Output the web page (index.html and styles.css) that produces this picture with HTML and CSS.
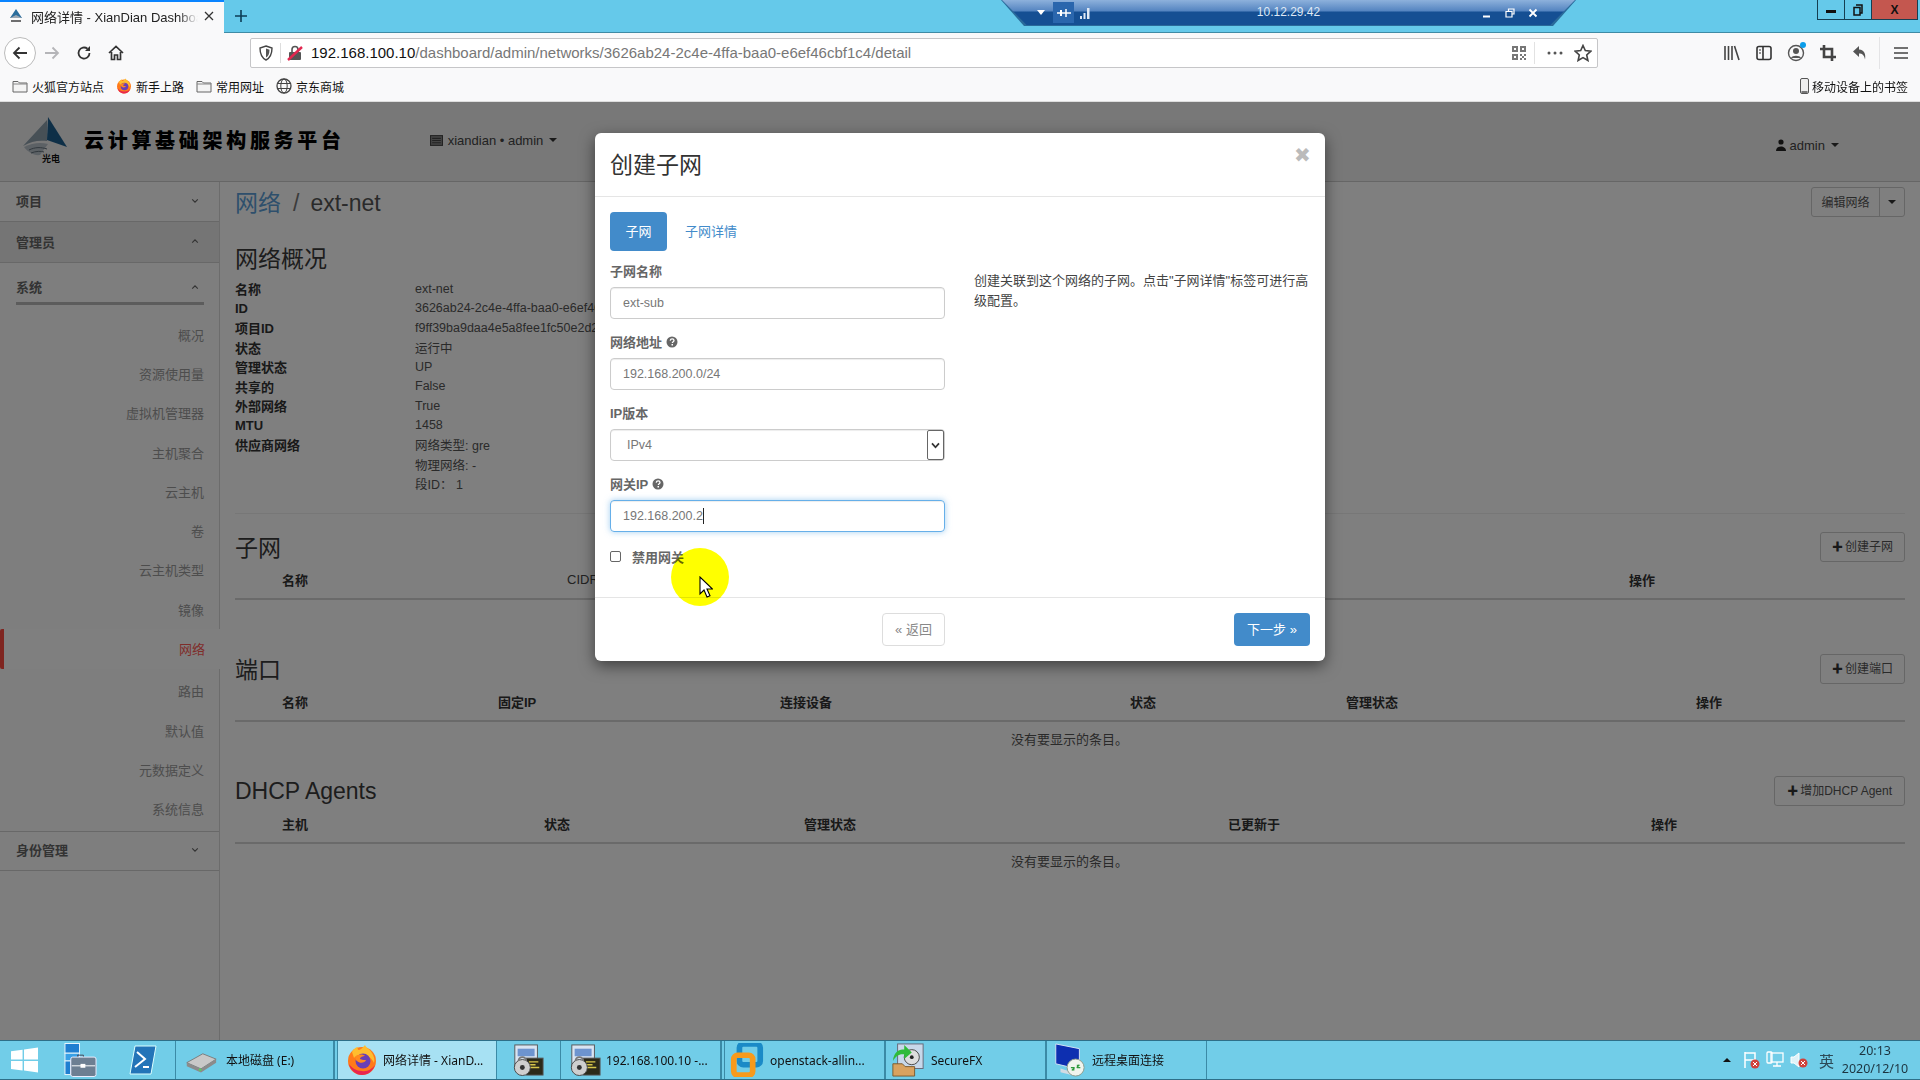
FILE: index.html
```html
<!DOCTYPE html>
<html lang="zh-CN">
<head>
<meta charset="utf-8">
<title>网络详情 - XianDian Dashboard</title>
<link rel="stylesheet" href="styles.css">
</head>
<body>
<svg class="sprite" width="0" height="0" aria-hidden="true">
  <defs>
    <symbol id="folder" viewBox="0 0 16 14"><path d="M1 2.500h5l1.500 1.500H15v9H1z" fill="#f4f4f4" stroke="#666"/><path d="M1 5h14" stroke="#888"/></symbol>
    <symbol id="ff" viewBox="0 0 32 32"><circle cx="16" cy="17" r="14" fill="#ff7a1a"/><path d="M6 8C8 4 11 3 12 3c-1 2 0 3 1 3 3-1 5-4 6-5 1 3 5 4 7 8 2 3 3 7 2 10-3-6-8-9-13-8-3 0-6 1-7 3z" fill="#ffbd2e"/><path d="M3 20c1 6 7 11 13 11s11-4 13-10c-3 4-8 7-13 6-6 0-10-3-13-7z" fill="#e8264f"/><circle cx="17" cy="17" r="7.500" fill="#6a3fb5"/><path d="M10 12c3-2 7-2 9 0-2 0-5 1-5 3 2 1 4 1 6 1-1 3-6 4-9 1-2-1-2-3-1-5z" fill="#ff8a1e"/></symbol>
    <symbol id="lockapp" viewBox="0 0 34 34"><rect x="3" y="1" width="24" height="24" fill="#d9e4f2" stroke="#555"/><rect x="6" y="5" width="18" height="8" fill="#6d94cf"/><rect x="15" y="15" width="18" height="18" fill="#2c2a1a" stroke="#555"/><path d="M18 19h10M18 22h7M18 25h11" stroke="#d7c64a" stroke-width="1.500"/><circle cx="11" cy="25" r="8.500" fill="#cfcfcf" stroke="#444"/><circle cx="11" cy="25" r="2.600" fill="#333"/><path d="M7 18a4 4 0 0 1 8 0" fill="none" stroke="#777" stroke-width="2"/></symbol>
    <symbol id="chev-down" viewBox="0 0 10 6"><path d="M1.500 1 5 4.500 8.500 1" fill="none" stroke="#666" stroke-width="1.400"/></symbol>
    <symbol id="chev-up" viewBox="0 0 10 6"><path d="M1.500 5 5 1.500 8.500 5" fill="none" stroke="#666" stroke-width="1.400"/></symbol>
    <symbol id="help" viewBox="0 0 12 12"><circle cx="6" cy="6" r="5.500" fill="#666"/><path d="M4.200 4.600c.2-1.200 1-1.700 2-1.700 1.100 0 1.800.7 1.800 1.500 0 1.300-1.700 1.300-1.700 2.600" fill="none" stroke="#fff" stroke-width="1.300"/><rect x="5.500" y="8" width="1.500" height="1.500" fill="#fff"/></symbol>
  </defs>
</svg>

<div class="tabstrip">
  <div class="tab">
    <svg class="tab-favicon" viewBox="0 0 16 16"><path d="M8 1 14 10H2z" fill="#2a6d9c"/><path d="M2 10h12L8 7z" fill="#9aa7b3"/><path d="M3 13h10" stroke="#333" stroke-width="1.400"/></svg>
    <span class="tab-title">网络详情 - XianDian Dashboard</span>
    <svg class="tab-close" viewBox="0 0 10 10"><path d="M1 1l8 8M9 1 1 9" stroke="#333" stroke-width="1.300"/></svg>
  </div>
  <svg class="tab-new" viewBox="0 0 14 14"><path d="M7 1v12M1 7h12" stroke="#0c3c55" stroke-width="1.600"/></svg>
  <div class="strip-space"></div>
  <div class="winctl">
    <div class="winbtn winmin"><span class="glyph-min"></span></div>
    <div class="winbtn winmax"><svg viewBox="0 0 10 12" width="10" height="12"><path d="M3 1h6v8H7M1 3.500h6v7.500H1z" fill="none" stroke="#111" stroke-width="1.500"/></svg></div>
    <div class="winbtn winclose">X</div>
  </div>
</div>

<div class="rdbar">
  <div class="rd-inner">
    <div class="rd-left">
      <span class="rd-tri"></span>
      <span class="rd-pin"><svg viewBox="0 0 14 10" width="14" height="10"><path d="M0 5h14M9 1v8" stroke="#fff" stroke-width="1.500"/><path d="M4 2v6" stroke="#fff" stroke-width="2"/></svg></span>
      <svg viewBox="0 0 12 12" width="12" height="12"><path d="M1 12V9h2v3zM4.500 12V6h2v6zM8 12V1h2.500v11z" fill="#dfe9f5"/></svg>
    </div>
    <div class="rd-ip">10.12.29.42</div>
    <div class="rd-right">
      <svg viewBox="0 0 10 10" width="10" height="10"><path d="M1 8.500h7" stroke="#fff" stroke-width="2"/></svg>
      <svg viewBox="0 0 10 10" width="10" height="10"><path d="M3.500 3V1H9v5H7M1 3.500h6v5.500H1z" fill="none" stroke="#fff" stroke-width="1.200"/></svg>
      <svg viewBox="0 0 10 10" width="10" height="10"><path d="M1.500 1.500l7 7M8.500 1.500l-7 7" stroke="#fff" stroke-width="1.800"/></svg>
    </div>
  </div>
</div>

<div class="toolbar">
  <div class="tb-btn tb-back"><svg viewBox="0 0 18 18" width="18" height="18"><path d="M16 9H3M8.500 3.500 3 9l5.500 5.500" fill="none" stroke="#333" stroke-width="1.800"/></svg></div>
  <div class="tb-btn"><svg viewBox="0 0 18 18" width="18" height="18"><path d="M2 9h13M9.500 3.500 15 9l-5.500 5.500" fill="none" stroke="#b5b5b8" stroke-width="1.800"/></svg></div>
  <div class="tb-btn"><svg viewBox="0 0 18 18" width="18" height="18"><path d="M14.500 9A5.500 5.500 0 1 1 12.500 4.800" fill="none" stroke="#333" stroke-width="1.800"/><path d="M15 2v5h-5z" fill="#333"/></svg></div>
  <div class="tb-btn"><svg viewBox="0 0 18 18" width="18" height="18"><path d="M2 9 9 2.500 16 9M4.500 8v7.500h3V11h3v4.500h3V8" fill="none" stroke="#333" stroke-width="1.700"/></svg></div>
  <div class="urlbar">
    <svg class="url-shield" viewBox="0 0 14 16"><path d="M7 1 13 3c0 6-2 10-6 12C3 13 1 9 1 3z" fill="none" stroke="#444" stroke-width="1.400"/><path d="M7 3.500 10.500 4.700C10.500 8.500 9.500 11 7 12.500z" fill="#555"/></svg>
    <span class="url-div"></span>
    <svg class="url-lock" viewBox="0 0 16 16"><rect x="2" y="7" width="12" height="8" rx="1" fill="#555"/><path d="M5 7V4.500a3 3 0 0 1 6 0V7" fill="none" stroke="#555" stroke-width="1.600"/><path d="M1 15 15 2" stroke="#e22850" stroke-width="2.400"/></svg>
    <span class="url-text"><span class="url-host">192.168.100.10</span>/dashboard/admin/networks/3626ab24-2c4e-4ffa-baa0-e6ef46cbf1c4/detail</span>
    <svg class="url-qr" viewBox="0 0 14 14"><path d="M0 0h6v6H0zM2 2v2h2V2zM8 0h6v6H8zM10 2v2h2V2zM0 8h6v6H0zM2 10v2h2v-2zM8 8h2v2H8zM12 8h2v2h-2zM10 10h2v2h-2zM8 12h2v2H8zM12 12h2v2h-2z" fill="#777" fill-rule="evenodd"/></svg>
    <span class="url-div2"></span>
    <svg class="url-dots" viewBox="0 0 16 4"><circle cx="2" cy="2" r="1.500" fill="#555"/><circle cx="8" cy="2" r="1.500" fill="#555"/><circle cx="14" cy="2" r="1.500" fill="#555"/></svg>
    <svg class="url-star" viewBox="0 0 18 18"><path d="M9 1.500 11.300 6.600 16.800 7.200 12.700 11 13.900 16.500 9 13.600 4.100 16.500 5.300 11 1.200 7.200 6.700 6.600z" fill="none" stroke="#444" stroke-width="1.600"/></svg>
  </div>
  <div class="tb-right">
    <div class="tb-btn"><svg viewBox="0 0 18 16" width="18" height="16"><path d="M2 1v14M5.500 1v14M9 1v14M11.500 1 16 15" fill="none" stroke="#444" stroke-width="1.600"/></svg></div>
    <div class="tb-btn"><svg viewBox="0 0 18 16" width="18" height="16"><rect x="2" y="1.500" width="14" height="13" rx="2" fill="none" stroke="#333" stroke-width="1.600"/><path d="M8 2v12" stroke="#333" stroke-width="1.600"/><path d="M4 5h2M4 8h2" stroke="#333"/></svg></div>
    <div class="tb-btn tb-acct"><svg viewBox="0 0 18 18" width="18" height="18"><circle cx="9" cy="9" r="7.500" fill="none" stroke="#555" stroke-width="1.400"/><circle cx="9" cy="7" r="3" fill="#555"/><path d="M4 14c1-3 9-3 10 0" fill="#555"/></svg><span class="acct-dot"></span></div>
    <div class="tb-btn"><svg viewBox="0 0 18 18" width="18" height="18"><path d="M5 1v12h12M1 5h12v12" fill="none" stroke="#444" stroke-width="2.600"/></svg></div>
    <div class="tb-btn"><svg viewBox="0 0 18 16" width="18" height="16"><path d="M8 1 2 6.500 8 12V8.500c3 0 5 1 6 6 1-5-.5-9.500-6-10z" fill="#555"/></svg></div>
    <span class="tb-sep"></span>
    <div class="tb-btn"><svg viewBox="0 0 16 14" width="16" height="14"><path d="M1 2h14M1 7h14M1 12h14" stroke="#444" stroke-width="1.600"/></svg></div>
  </div>
</div>

<div class="bookmarks">
  <div class="bm"><svg class="bm-ico"><use href="#folder"/></svg>火狐官方站点</div>
  <div class="bm"><svg class="bm-ico"><use href="#ff"/></svg>新手上路</div>
  <div class="bm"><svg class="bm-ico"><use href="#folder"/></svg>常用网址</div>
  <div class="bm"><svg class="bm-ico" viewBox="0 0 16 16"><circle cx="8" cy="8" r="7" fill="none" stroke="#444" stroke-width="1.300"/><ellipse cx="8" cy="8" rx="3.200" ry="7" fill="none" stroke="#444"/><path d="M1 5.500h14M1 10.500h14" stroke="#444"/></svg>京东商城</div>
  <div class="bm bm-mobile"><svg class="bm-phone" viewBox="0 0 9 16"><rect x=".5" y=".5" width="8" height="15" rx="1.500" fill="#eee" stroke="#555"/><rect x="1.500" y="13" width="6" height="2" fill="#777"/></svg>移动设备上的书签</div>
</div>

<div class="app">
  <header class="topbar">
    <div class="brand">
      <svg class="brand-logo" viewBox="0 0 50 46"><path d="M27 0 46 30 26 23z" fill="#1d5f8f"/><path d="M26 3 2 29c8-5 16-6 24-5z" fill="#8fa0ad"/><path d="M3 30c8-4 16-5 24-3l-8 11c-6 1-12-3-16-8z" fill="#b9c2ca"/><path d="M8 33c6-3 12-3 18-1M10 36c5-2 10-2 13-1" stroke="#63717c" fill="none"/><text class="brand-mini" x="21" y="45">光电</text></svg>
      <span class="brand-name">云计算基础架构服务平台</span>
    </div>
    <div class="project"><svg class="proj-ico" viewBox="0 0 12 10"><rect x=".5" y=".5" width="11" height="9" fill="#888" stroke="#444"/><path d="M2 3h8M2 5h8M2 7h8" stroke="#444"/></svg>xiandian • admin<span class="caret-down"></span></div>
    <div class="user"><svg class="user-ico" viewBox="0 0 10 12"><circle cx="5" cy="3" r="2.600" fill="#222"/><path d="M0 12c0-6 10-6 10 0z" fill="#222"/></svg>admin<span class="caret-down"></span></div>
  </header>
  <div class="workspace">
    <nav class="sidebar">
      <div class="nav-head">项目<svg class="chev"><use href="#chev-down"/></svg></div>
      <div class="nav-head nav-head-open">管理员<svg class="chev"><use href="#chev-up"/></svg></div>
      <div class="nav-sub">系统<svg class="chev"><use href="#chev-up"/></svg></div>
      <div class="nav-list">
        <a class="nav-item">概况</a>
        <a class="nav-item">资源使用量</a>
        <a class="nav-item">虚拟机管理器</a>
        <a class="nav-item">主机聚合</a>
        <a class="nav-item">云主机</a>
        <a class="nav-item">卷</a>
        <a class="nav-item">云主机类型</a>
        <a class="nav-item">镜像</a>
        <a class="nav-item nav-active">网络</a>
        <a class="nav-item">路由</a>
        <a class="nav-item">默认值</a>
        <a class="nav-item">元数据定义</a>
        <a class="nav-item">系统信息</a>
      </div>
      <div class="nav-head nav-last">身份管理<svg class="chev"><use href="#chev-down"/></svg></div>
    </nav>
    <main class="content">
      <div class="page-head">
        <h1 class="crumb"><a class="crumb-link">网络</a><span class="crumb-sep">/</span>ext-net</h1>
        <div class="btn-split"><span class="split-main">编辑网络</span><span class="split-caret"><span class="caret-down caret-flush"></span></span></div>
      </div>
      <h2 class="overview-title">网络概况</h2>
      <dl class="facts">
        <dt>名称</dt><dd>ext-net</dd>
        <dt>ID</dt><dd>3626ab24-2c4e-4ffa-baa0-e6ef46cbf1c4</dd>
        <dt>项目ID</dt><dd>f9ff39ba9daa4e5a8fee1fc50e2d2c77</dd>
        <dt>状态</dt><dd>运行中</dd>
        <dt>管理状态</dt><dd>UP</dd>
        <dt>共享的</dt><dd>False</dd>
        <dt>外部网络</dt><dd>True</dd>
        <dt>MTU</dt><dd>1458</dd>
        <dt>供应商网络</dt><dd>网络类型: gre</dd>
        <dt></dt><dd>物理网络: -</dd>
        <dt></dt><dd>段ID： 1</dd>
      </dl>
      <hr class="rule">
      <section class="block">
        <div class="block-head"><h2>子网</h2><span class="btn-add"><b class="plus">✚</b>创建子网</span></div>
        <div class="thead cols-subnet"><span>名称</span><span class="th-light">CIDR</span><span>操作</span></div>
        <div class="empty">没有要显示的条目。</div>
      </section>
      <section class="block">
        <div class="block-head"><h2>端口</h2><span class="btn-add"><b class="plus">✚</b>创建端口</span></div>
        <div class="thead cols-port"><span>名称</span><span>固定IP</span><span>连接设备</span><span>状态</span><span>管理状态</span><span>操作</span></div>
        <div class="empty">没有要显示的条目。</div>
      </section>
      <section class="block">
        <div class="block-head"><h2 class="h-latin">DHCP Agents</h2><span class="btn-add btn-add-wide"><b class="plus">✚</b>增加DHCP Agent</span></div>
        <div class="thead cols-dhcp"><span>主机</span><span>状态</span><span>管理状态</span><span>已更新于</span><span>操作</span></div>
        <div class="empty">没有要显示的条目。</div>
      </section>
    </main>
  </div>

  <div class="backdrop"></div>

  <div class="modal">
    <div class="modal-head"><h3>创建子网</h3><span class="modal-x">✖</span></div>
    <div class="modal-body">
      <div class="pills"><span class="pill pill-on">子网</span><span class="pill">子网详情</span></div>
      <div class="modal-cols">
        <form class="form">
          <label class="lbl">子网名称</label>
          <div class="field">ext-sub</div>
          <label class="lbl">网络地址 <svg class="help"><use href="#help"/></svg></label>
          <div class="field">192.168.200.0/24</div>
          <label class="lbl">IP版本</label>
          <div class="field field-select"><span class="select-val">IPv4</span><span class="select-arrow"><svg viewBox="0 0 10 8" width="9" height="7"><path d="M1 1.500 5 6 9 1.500" fill="none" stroke="#333" stroke-width="2"/></svg></span></div>
          <label class="lbl">网关IP <svg class="help"><use href="#help"/></svg></label>
          <div class="field field-focus">192.168.200.2<span class="text-caret"></span></div>
          <div class="check"><span class="checkbox"></span>禁用网关</div>
        </form>
        <p class="desc">创建关联到这个网络的子网。点击"子网详情"标签可进行高级配置。</p>
      </div>
    </div>
    <div class="modal-foot">
      <div class="foot-col"><span class="btn-back">« 返回</span></div>
      <div class="foot-col"><span class="btn-next">下一步 »</span></div>
    </div>
  </div>

  <div class="spot"></div>
  <svg class="pointer" viewBox="0 0 14 24" width="14" height="24"><path d="M1 1v17l4-4 3 7 3-1.300-3-6.700h5.500z" fill="#fff" stroke="#000" stroke-width="1.100"/></svg>
</div>

<footer class="taskbar">
  <div class="quick">
    <svg class="q-win" viewBox="0 0 28 26"><path d="M0 4 12 2.300V12.500H0zM13.500 2 28 0V12.500H13.500zM0 14H12V24L0 22.300zM13.500 14H28V26L13.500 24z" fill="#fff"/></svg>
    <svg class="q-srv" viewBox="0 0 34 36"><rect x="1" y="1" width="15" height="10" fill="#1f7fd1" stroke="#e8f6fc"/><rect x="1" y="11" width="15" height="8" fill="#39a0e6" stroke="#e8f6fc"/><rect x="1" y="19" width="6" height="14" fill="#1f7fd1" stroke="#e8f6fc"/><path d="M14 15v-2h6v2" fill="none" stroke="#445"/><rect x="7" y="15" width="26" height="20" rx="2" fill="#6d7f92" stroke="#eef"/><path d="M8 24h24" stroke="#fff"/><rect x="17" y="22" width="5" height="4" fill="#fff"/></svg>
    <svg class="q-ps" viewBox="0 0 28 30"><path d="M6 1h21l-5 28H1z" fill="#2374b8" stroke="#dff"/><path d="M8 7l8 7-10 8M14 22h6" fill="none" stroke="#fff" stroke-width="2"/></svg>
  </div>
  <div class="task task-first">
    <svg class="t-ico t-ico-drive" viewBox="0 0 36 28"><path d="M2 17 20 7l15 6-17 11z" fill="#c8c8c8" stroke="#777"/><path d="M2 17v4l16 7 17-11v-4L18 24z" fill="#8b8b8b"/><circle cx="17" cy="25" r="1.500" fill="#5bd05b"/></svg>
    <span>本地磁盘 (E:)</span>
  </div>
  <div class="task task-active"><svg class="t-ico t-ico-ff"><use href="#ff"/></svg><span>网络详情 - XianD...</span></div>
  <div class="task task-small"><svg class="t-ico t-ico-lock"><use href="#lockapp"/></svg></div>
  <div class="task task-gap"><svg class="t-ico t-ico-lock"><use href="#lockapp"/></svg><span>192.168.100.10 -...</span></div>
  <div class="task task-tight">
    <svg class="t-ico" viewBox="0 0 32 36"><rect x="8" y="1" width="22" height="22" rx="4" fill="none" stroke="#1a8ac7" stroke-width="6"/><rect x="2" y="13" width="20" height="21" rx="4" fill="none" stroke="#f79a1c" stroke-width="6"/></svg>
    <span>openstack-allin...</span>
  </div>
  <div class="task task-tight">
    <svg class="t-ico" viewBox="0 0 34 36"><rect x="6" y="1" width="27" height="26" fill="#c8d8ea" stroke="#667"/><circle cx="21" cy="15" r="8" fill="#ddd" stroke="#444"/><circle cx="21" cy="15" r="2" fill="#222"/><path d="M1 19C2 9 8 6 13 7V2l8 8-8 7v-5c-5-1-9 2-12 7z" fill="#2fbb3a"/><path d="M1 22h10l3 3h10v10H1z" fill="#d9a25f" stroke="#7a5a2d"/></svg>
    <span>SecureFX</span>
  </div>
  <div class="task task-tight">
    <svg class="t-ico" viewBox="0 0 34 36"><path d="M3 1 28 6v22L3 22z" fill="#0d2fb0" stroke="#d8e4f5"/><path d="M8 27l16 5v3l-16-4z" fill="#d3dbe3"/><circle cx="24" cy="26" r="9" fill="#f0f4ee" stroke="#8a9a8a"/><path d="M20 29l3-3M28 23l-3 3M19 26h3v3M29 26h-3v-3" stroke="#2e9a3d" fill="none" stroke-width="1.400"/></svg>
    <span>远程桌面连接</span>
  </div>
  <div class="tray">
    <span class="tray-up"></span>
    <svg class="tray-ico" viewBox="0 0 18 18"><path d="M3 1v16M3 2h10v7H3" fill="none" stroke="#fff" stroke-width="1.500"/><circle cx="13" cy="13" r="4.500" fill="#d0403a"/><path d="M11 11l4 4M15 11l-4 4" stroke="#fff"/></svg>
    <svg class="tray-ico" viewBox="0 0 18 18"><rect x="5" y="2" width="12" height="9" fill="none" stroke="#fff" stroke-width="1.300"/><rect x="1" y="1" width="5" height="11" rx="1" fill="none" stroke="#fff" stroke-width="1.300"/><path d="M11 11v4M7 15h8" stroke="#fff" stroke-width="1.300"/></svg>
    <svg class="tray-ico" viewBox="0 0 18 18"><path d="M1 6h3l5-4v14l-5-4H1z" fill="#dff2f8" stroke="#fff"/><circle cx="13" cy="12" r="4.500" fill="#d0403a"/><path d="M11 10l4 4M15 10l-4 4" stroke="#fff"/></svg>
    <span class="tray-ime">英</span>
    <div class="clock"><span>20:13</span><span>2020/12/10</span></div>
  </div>
</footer>
</body>
</html>
```
FILE: styles.css
```css
* { box-sizing: border-box; }
html, body { margin: 0; padding: 0; }
body {
  width: 1920px;
  height: 1080px;
  overflow: hidden;
  display: flex;
  flex-direction: column;
  font-family: "Liberation Sans", "Noto Sans CJK SC", sans-serif;
  font-size: 13px;
  color: #333;
  position: relative;
}
.sprite { position: absolute; }
svg { display: block; flex: none; }

/* browser tab strip */
.tabstrip {
  height: 33px;
  flex: none;
  background: #65c9ea;
  border-bottom: 1px solid #3f8ba5;
  display: flex;
  align-items: flex-start;
}
.tab {
  width: 224px;
  height: 33px;
  background: #f9f9fa;
  border-top: 2px solid #0a84ff;
  display: flex;
  align-items: center;
  padding: 0 9px 3px 8px;
  color: #222;
}
.tab-favicon { width: 16px; height: 16px; margin-right: 7px; }
.tab-title {
  width: 167px;
  white-space: nowrap;
  overflow: hidden;
  font-size: 13px;
  -webkit-mask-image: linear-gradient(to right, #000 88%, transparent);
  mask-image: linear-gradient(to right, #000 88%, transparent);
}
.tab-close { width: 10px; height: 10px; margin-left: 6px; }
.tab-new { width: 14px; height: 14px; margin: 9px 0 0 10px; }
.strip-space { flex: 1; }
.winctl {
  display: flex;
  height: 20px;
  margin-right: 2px;
  border: 1px solid #153f52;
  border-top: 0;
}
.winbtn {
  width: 27px;
  display: flex;
  align-items: center;
  justify-content: center;
  border-right: 1px solid #153f52;
}
.winclose { width: 45px; background: #c4574f; border-right: 0; color: #111; font-weight: 700; font-size: 12px; }
.glyph-min { width: 10px; height: 3px; background: #111; margin-top: 4px; }

/* remote session bar */
.rdbar {
  position: absolute;
  left: 1001px;
  top: 0;
  width: 575px;
  height: 26px;
  background: #2a6a9a;
  clip-path: polygon(0 0, 100% 0, 96% 100%, 4% 100%);
}
.rd-inner {
  height: 25px;
  margin: 0 1px;
  background: linear-gradient(to bottom, #8db1dc 0, #5484c0 11px, #154f93 12px, #154f93 100%);
  clip-path: polygon(0 0, 100% 0, 95.700% 100%, 4.300% 100%);
  display: grid;
  grid-template-columns: 1fr auto 1fr;
  align-items: center;
  color: #dfe9f5;
  font-size: 12px;
}
.rd-left { display: flex; align-items: center; margin-left: 35px; gap: 5px; }
.rd-tri { width: 0; height: 0; border: 4px solid transparent; border-top: 5px solid #fff; border-bottom: 0; margin-right: 3px; }
.rd-pin { width: 21px; height: 21px; background: #2a66ad; display: flex; align-items: center; justify-content: center; }
.rd-ip { margin-bottom: 2px; }
.rd-right { display: flex; justify-content: flex-end; align-items: center; gap: 13px; margin-right: 37px; }

/* toolbar */
.toolbar {
  height: 36px;
  flex: none;
  background: #f9f9fa;
  display: flex;
  align-items: center;
  padding: 3px 0 0 4px;
}
.tb-btn {
  width: 32px;
  height: 32px;
  display: flex;
  align-items: center;
  justify-content: center;
  position: relative;
}
.tb-back { border: 1px solid #bbb; border-radius: 50%; background: #fff; }
.urlbar {
  width: 1348px;
  height: 30px;
  margin-left: 118px;
  background: #fff;
  border: 1px solid #c6c6c8;
  border-radius: 2px;
  display: flex;
  align-items: center;
  padding-left: 8px;
}
.url-shield { width: 14px; height: 16px; }
.url-div { width: 1px; height: 20px; background: #ddd; margin: 0 6px 0 7px; }
.url-lock { width: 16px; height: 16px; }
.url-text {
  margin-left: 8px;
  font-size: 15px;
  color: #777;
  flex: 1;
  white-space: nowrap;
}
.url-host { color: #111; }
.url-qr { width: 14px; height: 14px; }
.url-div2 { width: 1px; height: 22px; background: #e2e2e2; margin: 0 12px 0 8px; }
.url-dots { width: 16px; height: 4px; margin-right: 11px; }
.url-star { width: 18px; height: 18px; margin-right: 5px; }
.tb-right { display: flex; align-items: center; margin-left: 118px; }
.tb-sep { width: 1px; height: 32px; background: #e4e4e6; margin-left: 3px; margin-right: 5px; }
.acct-dot { position: absolute; right: 6px; top: 5px; width: 6px; height: 6px; border-radius: 50%; background: #0a9dea; }

/* bookmarks */
.bookmarks {
  height: 33px;
  flex: none;
  background: #f9f9fa;
  border-bottom: 1px solid #ddd;
  display: flex;
  align-items: center;
  padding: 2px 0 0 12px;
  font-size: 12px;
  color: #111;
  gap: 12px;
}
.bm { display: flex; align-items: center; gap: 4px; }
.bm-ico { width: 16px; height: 16px; }
.bm-mobile { margin-left: auto; margin-right: 12px; gap: 3px; }
.bm-phone { width: 9px; height: 16px; }

/* app */
.app {
  flex: 1;
  min-height: 0;
  position: relative;
  background: #fff;
  display: flex;
  flex-direction: column;
}
.topbar {
  height: 80px;
  flex: none;
  background: #f0f0f0;
  border-bottom: 1px solid #ccc;
  display: flex;
  position: relative;
}
.brand { display: flex; align-items: center; padding-left: 21px; height: 74px; }
.brand-logo { width: 50px; height: 46px; margin-top: 2px; }
.brand-mini { font-size: 9px; font-weight: 700; fill: #111; }
.brand-name {
  margin-left: 13px;
  font-size: 20px;
  font-weight: 900;
  letter-spacing: 3.700px;
  color: #000;
  white-space: nowrap;
  font-family: "Noto Sans CJK SC", sans-serif;
}
.project {
  display: flex;
  align-items: center;
  height: 76px;
  margin-left: 85px;
  color: #444;
  font-size: 13px;
  white-space: nowrap;
}
.proj-ico { width: 13px; height: 11px; margin-right: 5px; }
.user {
  margin-left: auto;
  margin-right: 81px;
  display: flex;
  align-items: center;
  height: 86px;
  color: #444;
}
.user-ico { width: 10px; height: 12px; margin-right: 4px; }
.caret-down {
  display: inline-block;
  width: 0; height: 0;
  border: 4px solid transparent;
  border-top: 4px solid #333;
  border-bottom: 0;
  margin-left: 6px;
}
.caret-flush { margin: 0; }

.workspace { flex: 1; min-height: 0; display: flex; }
.sidebar {
  width: 220px;
  flex: none;
  background: #fcfcfc;
  border-right: 1px solid #d8d8d8;
}
.nav-head {
  height: 40px;
  border-bottom: 1px solid #d0d0d0;
  display: flex;
  align-items: center;
  justify-content: space-between;
  padding: 0 20px 2px 16px;
  color: #666;
  font-weight: 700;
}
.nav-head-open { height: 41px; background: #ebebeb; }
.nav-last { border-top: 1px solid #d0d0d0; }
.chev { width: 8px; height: 6px; }
.nav-sub {
  height: 42px;
  margin: 0 15px 10px 16px;
  border-bottom: 3px solid #b8b8b8;
  display: flex;
  align-items: center;
  justify-content: space-between;
  padding: 8px 5px 0 0;
  color: #666;
  font-weight: 700;
}
.nav-list { display: flex; flex-direction: column; padding-bottom: 2px; }
.nav-item {
  height: 39.300px;
  display: flex;
  align-items: center;
  justify-content: flex-end;
  padding: 0 15px 1px 0;
  color: #9b9b9b;
}
.nav-active {
  width: 220px;
  margin-bottom: 3px;
  background: #fff;
  color: #ff5a55;
  border-left: 4px solid #ff4a40;
  border-radius: 2px 0 0 2px;
}
.content { flex: 1; min-width: 0; padding: 0 15px; background: #fff; }
.page-head { height: 42px; display: flex; justify-content: space-between; align-items: flex-start; }
h1, h2, h3 { margin: 0; font-weight: 400; }
.crumb { font-size: 23px; line-height: 42px; color: #555; }
.crumb-link { color: #5c9fd8; }
.crumb-sep { margin: 0 11px 0 12px; color: #777; }
.btn-split {
  margin-top: 5px;
  height: 30px;
  width: 94px;
  border: 1px solid #ccc;
  border-radius: 3px;
  display: flex;
  font-size: 12px;
  color: #555;
}
.split-main { flex: 1; display: flex; align-items: center; justify-content: center; border-right: 1px solid #ccc; padding-bottom: 2px; }
.split-caret { width: 24px; display: flex; align-items: center; justify-content: center; }
.overview-title { font-size: 23px; line-height: 34px; margin-top: 18px; color: #3a3a3a; }
.facts {
  margin: 3px 0 0;
  display: grid;
  grid-template-columns: 180px 1fr;
  grid-auto-rows: 19.500px;
  align-items: center;
  white-space: nowrap;
}
.facts dt { font-weight: 700; color: #333; }
.facts dd { margin: 0; color: #555; font-size: 12.500px; }
.rule { border: 0; height: 1px; background: #eee; margin: 19px 0 18px; }
.block { margin-bottom: 18px; }
.block-head { height: 30px; display: flex; justify-content: space-between; align-items: center; }
.block-head h2 { font-size: 23px; color: #3a3a3a; padding-bottom: 2px; }
.block-head .h-latin { padding: 2px 0 0; }
.btn-add {
  height: 30px;
  padding: 0 11px 2px;
  border: 1px solid #ccc;
  border-radius: 3px;
  display: flex;
  align-items: center;
  font-size: 12px;
  color: #555;
}
.btn-add-wide { padding-left: 12px; padding-right: 12px; }
.plus { font-weight: 400; font-size: 11px; color: #333; margin-right: 2px; }
.thead {
  height: 38px;
  padding-left: 47px;
  border-bottom: 2px solid #d4d4d4;
  display: grid;
  align-items: center;
  font-weight: 700;
  color: #333;
  white-space: nowrap;
}
.th-light { font-weight: 400; color: #444; }
.cols-subnet { grid-template-columns: 285px 1062px 1fr; }
.cols-port { grid-template-columns: 216px 282px 350px 216px 350px 1fr; }
.cols-dhcp { grid-template-columns: 262px 260px 424px 423px 1fr; }
.empty { height: 36px; display: flex; align-items: center; justify-content: center; color: #555; padding: 0 1px 2px 0; }

.backdrop { position: absolute; inset: 0; background: rgba(0, 0, 0, .5); }

/* modal */
.modal {
  position: absolute;
  left: 595px;
  top: 31px;
  width: 730px;
  height: 528px;
  background: #fff;
  border-radius: 6px;
  box-shadow: 0 5px 15px rgba(0, 0, 0, .5);
  display: flex;
  flex-direction: column;
}
.modal-head {
  height: 64px;
  flex: none;
  border-bottom: 1px solid #e5e5e5;
  display: flex;
  justify-content: space-between;
  padding: 0 15px;
  align-items: center;
}
.modal-head h3 { font-size: 23px; color: #333; margin-bottom: 3px; }
.modal-x { color: #bbb; font-size: 20px; margin-bottom: 20px; margin-right: -1px; }
.modal-body { flex: 1; padding: 15px 15px 0; }
.pills { display: flex; gap: 18px; height: 39px; margin-bottom: 11px; }
.pill { height: 39px; display: flex; align-items: center; color: #428bca; padding-bottom: 2px; }
.pill-on { width: 57px; justify-content: center; background: #428bca; color: #fff; border-radius: 4px; }
.modal-cols { display: grid; grid-template-columns: 335px 1fr; column-gap: 29px; }
.form { display: block; }
.lbl { display: flex; align-items: center; gap: 4px; height: 20px; padding-bottom: 3px; margin-bottom: 5px; font-weight: 700; color: #666; }
.help { width: 12px; height: 12px; }
.field {
  height: 32px;
  margin-bottom: 14px;
  border: 1px solid #ccc;
  border-radius: 4px;
  box-shadow: inset 0 1px 1px rgba(0, 0, 0, .075);
  padding-left: 12px;
  display: flex;
  align-items: center;
  font-size: 12.500px;
  color: #777;
}
.field-select { padding-left: 16px; padding-right: 0; justify-content: space-between; }
.select-arrow {
  width: 17px;
  height: 30px;
  border: 1px solid #666;
  border-radius: 2px;
  display: flex;
  align-items: center;
  justify-content: center;
  background: #fff;
}
.field-focus { border-color: #66afe9; box-shadow: inset 0 1px 1px rgba(0, 0, 0, .075), 0 0 6px rgba(102, 175, 233, .6); }
.text-caret { width: 1px; height: 16px; background: #222; }
.check { height: 22px; padding-bottom: 2px; display: flex; align-items: center; font-weight: 700; color: #666; }
.checkbox { width: 11px; height: 11px; border: 1px solid #666; border-radius: 2px; margin-right: 11px; }
.desc { margin: 9px 0 0; line-height: 19.500px; color: #444; }
.modal-foot {
  height: 64px;
  flex: none;
  border-top: 1px solid #e5e5e5;
  padding: 15px 15px 0;
  display: grid;
  grid-template-columns: 335px 1fr;
  column-gap: 29px;
}
.foot-col { display: flex; justify-content: flex-end; }
.btn-back {
  width: 63px;
  height: 33px;
  border: 1px solid #ddd;
  border-radius: 4px;
  padding-bottom: 2px;
  display: flex;
  align-items: center;
  justify-content: center;
  color: #888;
}
.btn-next {
  width: 76px;
  height: 33px;
  background: #428bca;
  border-radius: 4px;
  padding-bottom: 2px;
  display: flex;
  align-items: center;
  justify-content: center;
  color: #fff;
}

.spot { position: absolute; left: 671px; top: 446px; width: 58px; height: 58px; border-radius: 50%; background: #ffff00; mix-blend-mode: multiply; }
.pointer { position: absolute; left: 699px; top: 474px; }

/* taskbar */
.taskbar {
  height: 40px;
  flex: none;
  background: #71cde8;
  border-top: 1px solid #2e6f88;
  border-bottom: 1px solid #2e6f88;
  display: flex;
  align-items: center;
  color: #111;
  font-size: 12px;
  font-family: "Noto Sans", "Noto Sans CJK SC", sans-serif;
}
.quick { width: 175px; display: flex; align-items: center; padding-left: 11px; flex: none; }
.q-win { width: 27px; height: 26px; }
.q-srv { width: 33px; height: 36px; margin-left: 26px; }
.q-ps { width: 28px; height: 30px; margin-left: 32px; }
.task {
  width: 160px;
  height: 38px;
  flex: none;
  display: flex;
  align-items: center;
  gap: 5px;
  padding-left: 8px;
  border-right: 1px solid #3b8aa6;
  white-space: nowrap;
}
.task-first { border-left: 1px solid #3b8aa6; width: 159px; padding-left: 9px; margin-right: 3px; box-shadow: 1px 0 0 #3b8aa6; }
.task-active { background: #a7e1f3; border-left: 1px solid #3b8aa6; }
.task-small { width: 64px; padding-left: 15px; }
.task-gap { margin-right: 3px; box-shadow: 1px 0 0 #3b8aa6; }
.task-tight { width: 161px; padding-left: 5px; box-shadow: inset 1px 0 0 #3b8aa6; }
.t-ico { width: 36px; height: 34px; }
.t-ico-drive { width: 32px; height: 26px; margin-right: 4px; }
.t-ico-ff { width: 32px; height: 32px; }
.t-ico-lock { width: 32px; height: 34px; }
.tray { margin-left: auto; display: flex; align-items: center; }
.tray-up { width: 0; height: 0; border: 4px solid transparent; border-bottom: 4px solid #111; border-top: 0; margin-right: 11px; }
.tray-ico { width: 18px; height: 18px; margin-right: 6px; }
.tray-ime { font-size: 15px; color: #2c4a57; margin: 0 7px 0 5px; font-family: "Noto Sans CJK SC", sans-serif; }
.clock { display: flex; flex-direction: column; align-items: center; width: 68px; margin-right: 11px; line-height: 18.500px; font-size: 12.500px; color: #1c3440; }
```
